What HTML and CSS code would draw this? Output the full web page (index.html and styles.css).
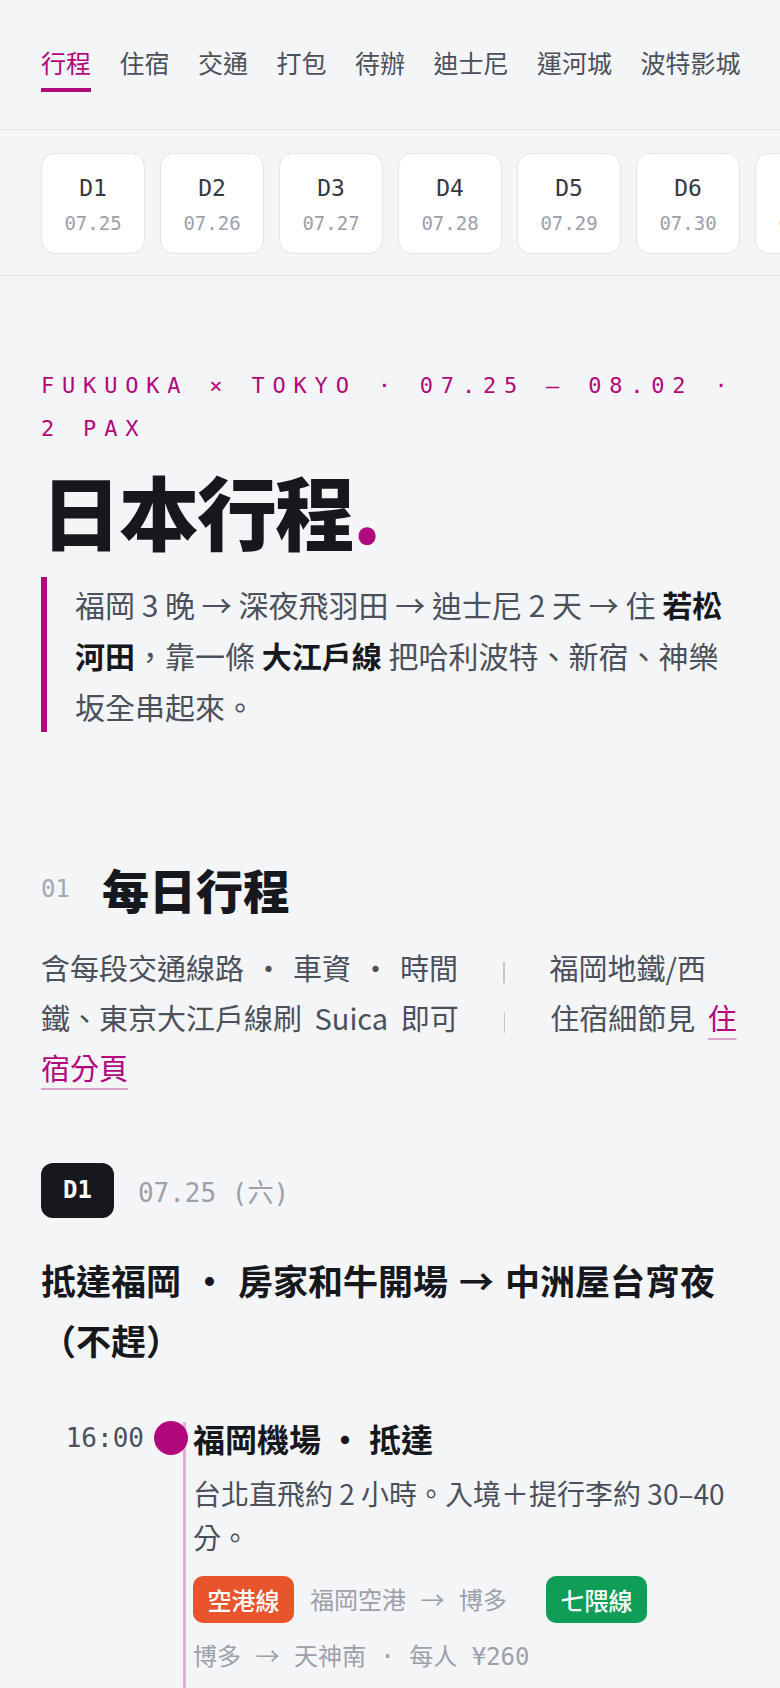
FILE: index.html
```html
<!DOCTYPE html>
<html lang="zh-Hant">
<head>
<meta charset="utf-8">
<title>日本行程</title>
<link rel="stylesheet" href="styles.css">
</head>
<body>
<nav class="nav">
  <a class="tab active">行程</a>
  <a class="tab">住宿</a>
  <a class="tab">交通</a>
  <a class="tab">打包</a>
  <a class="tab">待辦</a>
  <a class="tab">迪士尼</a>
  <a class="tab">運河城</a>
  <a class="tab">波特影城</a>
</nav>
<div class="days">
  <a class="card"><span class="card-d">D1</span><span class="card-date">07.25</span></a>
  <a class="card"><span class="card-d">D2</span><span class="card-date">07.26</span></a>
  <a class="card"><span class="card-d">D3</span><span class="card-date">07.27</span></a>
  <a class="card"><span class="card-d">D4</span><span class="card-date">07.28</span></a>
  <a class="card"><span class="card-d">D5</span><span class="card-date">07.29</span></a>
  <a class="card"><span class="card-d">D6</span><span class="card-date">07.30</span></a>
  <a class="card"><span class="card-d">D7</span><span class="card-date">07.31</span></a>
  <a class="card"><span class="card-d">D8</span><span class="card-date">08.01</span></a>
  <a class="card"><span class="card-d">D9</span><span class="card-date">08.02</span></a>
</div>
<main class="main">
  <section class="hero">
    <p class="kicker">FUKUOKA × TOKYO · 07.25 — 08.02 · 2 PAX</p>
    <h1 class="title">日本行程<span class="title-dot">.</span></h1>
    <p class="lead">福岡 3 晚 → 深夜飛羽田 → 迪士尼 2 天 → 住 <b>若松河田</b>，靠一條 <b>大江戶線</b> 把哈利波特、新宿、神樂坂全串起來。</p>
  </section>
  <section class="sec">
    <div class="sec-head"><span class="sec-num">01</span><h2 class="sec-title">每日行程</h2></div>
    <p class="sec-desc">含每段交通線路<span class="mid">・</span>車資<span class="mid">・</span>時間<span class="sep"></span>福岡地鐵/西<br>鐵、東京大江戶線刷 Suica 即可<span class="sep"></span>住宿細節見 <a class="link">住宿分頁</a></p>
    <div class="day">
      <div class="day-head"><span class="day-badge">D1</span><span class="day-date">07.25 (六)</span></div>
      <h3 class="day-title">抵達福岡<span class="dmid">・</span>房家和牛開場<span class="dmid">→</span>中洲屋台宵夜（不趕）</h3>
      <div class="event">
        <div class="time">16:00</div>
        <div class="ev-body">
          <span class="ev-dot"></span>
          <h4 class="ev-title">福岡機場<span class="emid">・</span>抵達</h4>
          <p class="ev-desc">台北直飛約 2 小時。入境＋提行李約 30–40 分。</p>
          <div class="routes">
            <span class="tag orange">空港線</span>
            <span class="route r1">福岡空港 <span class="arr">→</span> 博多</span>
            <span class="tag green">七隈線</span>
            <span class="route">博多 <span class="arr">→</span> 天神南 · 每人 ¥260</span>
          </div>
        </div>
      </div>
    </div>
  </section>
</main>
</body>
</html>
```
FILE: styles.css
```css
* { box-sizing: border-box; }
html, body { margin: 0; padding: 0; }
body {
  background: #f4f5f7;
  color: #4b505b;
  font-family: "Noto Sans CJK TC", "Noto Sans", sans-serif;
}
a { text-decoration: none; color: inherit; }
p, h1, h2, h3, h4 { margin: 0; }

/* top tabs */
.nav {
  display: flex;
  gap: 28.5px;
  padding: 44px 41px 37px;
  border-bottom: 1px solid #e1e3e8;
  font-size: 25px;
  line-height: 36px;
  white-space: nowrap;
  overflow: hidden;
}
.tab {
  color: #4b505b;
  padding-bottom: 8px;
  border-bottom: 4px solid transparent;
}
.tab.active {
  color: #b1087b;
  border-bottom-color: #b1087b;
}

/* day cards */
.days {
  display: flex;
  gap: 15px;
  padding: 23px 41px 21px;
  border-bottom: 1px solid #e1e3e8;
  overflow: hidden;
}
.card {
  flex: 0 0 104px;
  height: 101px;
  background: #fff;
  border: 1.5px solid #e3e5e9;
  border-radius: 14px;
  display: flex;
  flex-direction: column;
  align-items: center;
  padding-top: 19px;
  gap: 7px;
  font-family: "DejaVu Sans Mono", "Noto Sans CJK TC", monospace;
}
.card-d {
  font-size: 23px;
  line-height: 30px;
  color: #353942;
}
.card-date {
  font-size: 19px;
  line-height: 26px;
  color: #9ca0a9;
}

.main { padding: 0 41px 80px; }

/* hero */
.hero { padding-top: 88px; }
.kicker {
  font-family: "DejaVu Sans Mono", monospace;
  font-size: 22px;
  line-height: 43px;
  letter-spacing: 7.8px;
  color: #b1087b;
}
.title {
  margin-top: 16px;
  font-size: 80px;
  line-height: 86px;
  font-weight: 900;
  letter-spacing: -2px;
  color: #16181d;
}
.title-dot { color: #b1087b; }
.lead {
  margin-top: 25px;
  border-left: 6px solid #b1087b;
  padding: 2px 0 0 28px;
  font-size: 30px;
  line-height: 51px;
}
.lead b { color: #16181d; font-weight: 700; }

/* section */
.sec { padding-top: 127px; }
.sec-head {
  display: flex;
  align-items: center;
  gap: 32px;
}
.sec-num {
  font-family: "DejaVu Sans Mono", monospace;
  font-size: 24px;
  color: #a3a7af;
}
.sec-title {
  font-size: 47px;
  line-height: 60px;
  font-weight: 900;
  color: #16181d;
}
.sec-desc {
  margin-top: 23px;
  font-size: 29px;
  line-height: 50px;
  word-spacing: 6px;
}
.mid { margin: 0 10px; }
.sep {
  display: inline-block;
  width: 1.5px;
  height: 21px;
  background: #c4c7cd;
  margin: 0 45px;
  vertical-align: middle;
}
.link {
  color: #b1087b;
  text-decoration: underline;
  text-decoration-color: #e0a3cf;
  text-decoration-thickness: 2px;
  text-underline-offset: 8px;
}

/* day */
.day { padding-top: 71px; }
.day-head {
  display: flex;
  align-items: center;
  gap: 24px;
}
.day-badge {
  background: #16181d;
  color: #fff;
  border-radius: 12px;
  height: 55px;
  line-height: 55px;
  padding: 0 22px;
  font-family: "DejaVu Sans Mono", monospace;
  font-weight: 700;
  font-size: 24px;
}
.day-date {
  font-family: "DejaVu Sans Mono", "Noto Sans CJK TC", monospace;
  font-size: 26px;
  color: #9ca0a9;
}
.day-title {
  margin-top: 32px;
  font-size: 35px;
  line-height: 60px;
  font-weight: 700;
  color: #16181d;
}
.dmid { margin: 0 11px; }

/* timeline */
.event {
  display: flex;
  margin-top: 52px;
}
.time {
  flex: 0 0 103px;
  text-align: right;
  font-family: "DejaVu Sans Mono", monospace;
  font-size: 26px;
  line-height: 32px;
  color: #4b505b;
}
.ev-body {
  position: relative;
  flex: 1;
  margin-left: 38.5px;
  border-left: 3px solid #e3aed5;
  padding: 0 0 80px 7.5px;
}
.ev-dot {
  position: absolute;
  left: -31.5px;
  top: -1px;
  width: 34px;
  height: 34px;
  border-radius: 50%;
  background: #b1087b;
}
.ev-title {
  font-size: 32px;
  line-height: 32px;
  font-weight: 700;
  color: #16181d;
}
.emid { margin: 0 8px; }
.ev-desc {
  margin-top: 17px;
  font-size: 28px;
  line-height: 44px;
}
.routes {
  margin-top: 17px;
  display: flex;
  flex-wrap: wrap;
  align-items: center;
  column-gap: 16px;
  row-gap: 14px;
}
.tag {
  height: 47px;
  line-height: 47px;
  padding: 0 14.5px;
  border-radius: 10px;
  color: #fff;
  font-size: 24px;
  font-weight: 500;
}
.tag.orange { background: #e8552d; }
.tag.green { background: #0f9d58; }
.route {
  font-family: "DejaVu Sans Mono", "Noto Sans CJK TC", monospace;
  font-size: 24px;
  line-height: 36px;
  color: #9ca0a9;
  white-space: nowrap;
}
.route.r1 { margin-right: 23px; }
.arr { font-family: "Noto Sans CJK TC", sans-serif; }
```
